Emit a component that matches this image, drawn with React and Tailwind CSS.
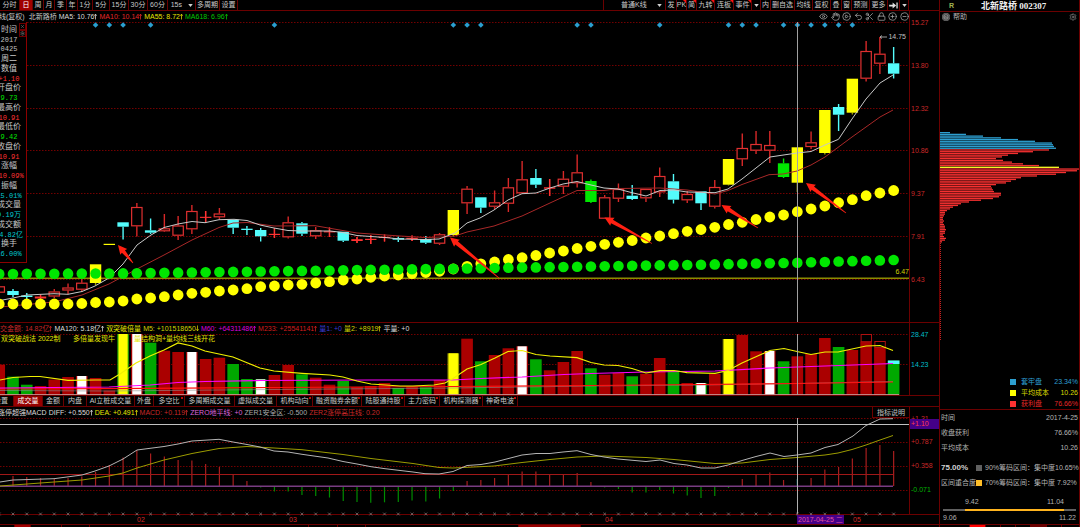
import React from "react";
import {
  Eye,
  Hand,
  CirclePlay,
  Undo2,
  Scissors,
  Lock,
  CirclePlus,
  CircleMinus,
  Settings,
  CircleHelp,
  X,
} from "lucide-react";

const STEP = 13.76;
const FIRST = 13;
const RED = "#ff3232";
const CYAN = "#54fcfc";
const GREEN = "#00e600";
const YELLOW = "#ffff00";
const xAt = (i) => FIRST + STEP * i;

// [kind, bodyTop, bodyBottom, high, low]; the first entry is session -1
const CANDLES = [
  ["r", 286.3, 292.7, 286, 293],
  ["c", 291, 295, 289, 297],
  ["c", 295.5, 297, 293, 301],
  ["x", 296.5, 298.5, 294.5, 299.5],
  ["r", 291.5, 296.5, 289, 298],
  ["r", 287.5, 290.5, 283.5, 294],
  ["r", 282.7, 289.7, 279, 292],
  ["y", 264.3, 283, 264.3, 285],
  ["y", 243.8, 245, 244, 245],
  ["c", 222.3, 226.7, 222.3, 239.5],
  ["r", 207, 226.3, 203, 236.5],
  ["c", 230.3, 232.7, 218.5, 234],
  ["r", 228.3, 231.3, 214, 232],
  ["r", 225.5, 235.7, 216, 240],
  ["r", 211, 229.3, 205, 234],
  ["x", 216.8, 217.9, 211, 222.5],
  ["r", 213.5, 217.3, 208, 219],
  ["c", 219.7, 227.7, 219.7, 234],
  ["c", 228.7, 230, 226, 235],
  ["c", 230, 236.3, 228, 241.5],
  ["x", 233.8, 235, 228, 238],
  ["r", 222.3, 237.3, 216.5, 238.5],
  ["c", 223.3, 233.7, 222, 236],
  ["r", 230.3, 236.3, 227, 239],
  ["x", 231.2, 232.4, 227.5, 237],
  ["c", 231.7, 240.7, 231.7, 242],
  ["x", 239.2, 241, 237, 243],
  ["x", 238.8, 240, 235, 244],
  ["x", 236.8, 238, 234.5, 241.5],
  ["c", 238, 239.7, 236.5, 242],
  ["x", 237.8, 239, 235.5, 241],
  ["c", 239, 242.7, 236, 244],
  ["r", 234.3, 243.7, 233, 245],
  ["y", 210, 235, 210, 236.5],
  ["r", 188.7, 203.3, 186, 214],
  ["c", 197.3, 207.7, 197.3, 213],
  ["r", 202.3, 206.7, 190.5, 209],
  ["r", 187.3, 203.7, 178, 212],
  ["r", 179.3, 193.3, 161, 193.3],
  ["c", 178, 184.7, 169, 188],
  ["x", 187.3, 188.7, 179, 196],
  ["r", 178.7, 186.7, 171, 194],
  ["r", 172.3, 183.3, 154.5, 187.5],
  ["g", 181, 202, 179.5, 203],
  ["r", 197.3, 218.7, 195, 218.7],
  ["r", 189, 198.7, 183.5, 202],
  ["c", 195.7, 199, 185, 200],
  ["r", 189, 198.3, 189, 202],
  ["r", 176, 192.3, 167.5, 197],
  ["c", 181.3, 199.7, 174, 203.5],
  ["r", 194, 200.3, 191, 203],
  ["c", 191.3, 203.3, 191.3, 210],
  ["r", 187, 206.7, 180, 208.5],
  ["y", 159, 184.7, 159, 185.5],
  ["r", 148, 159.3, 133.5, 166],
  ["r", 144, 150.7, 131, 154],
  ["r", 145, 150.7, 131, 163],
  ["g", 163.3, 177, 158.5, 178],
  ["y", 147.3, 182.7, 147.3, 192],
  ["r", 142.3, 147, 131.5, 149],
  ["y", 110, 153, 110, 154.5],
  ["c", 107, 114.7, 104, 131],
  ["y", 78.7, 112.7, 78.7, 114.5],
  ["r", 51, 78.7, 41, 81.5],
  ["r", 53.7, 63.7, 37, 74],
  ["c", 63.3, 73.7, 47, 78.5],
];

const MA5 =
  "0,300.5 13,298 27,295 54,293.7 68,294.3 82,291.5 95,286 109,278 123,264 137,245 151,235 164,227.5 178,224 192,221.5 205,222.7 219,219.7 234,219.3 247,220.5 260,225 274,228 288,230.5 302,231 330,231 343,232.5 357,235.5 385,237.5 400,239 425,239.5 439,239 447,236 455,233 467,223 480,218 494,210 508,200 522,193.7 536,193 550,188 563,184 577,181.5 591,185 604,188 618,189 632,192.7 646,196 660,190.5 674,190 687,192 715,192.7 728,189 742,179 770,157 797,153 811,151.5 825,145 838.5,139.3 852,119 866,99 880,83 893,75";
const MA10 =
  "0,307 27,304.5 54,302 82,295 109,284 137,269 164,255 192,240 219,227.5 233,223 247,222.5 274,226 315,225.7 357,233 400,236 425,237.5 441,237 455,236 467,232 494,226 522,216 550,203 577,190.5 604,190.5 618,188.5 660,188 687,190 715,194 728,190.5 742,184.5 769,174.7 783,174 797,171 811,165 825,157 852,137 880,117 893,110";

const YELLOW_DOTS = [
  304, 304, 304, 304, 304, 304, 303.5, 302.5, 302, 301, 299, 298, 296.7, 295, 293.3, 292.3, 291, 290, 288.7, 286.7,
  286, 285, 284.3, 283, 281.7, 280, 279, 277.3, 276, 275, 273.7, 272.5, 271.3, 269, 266.3, 263.8, 262, 259.5, 257.7,
  255.5, 253, 251, 248.5, 246.3, 244.3, 242.3, 240.5, 238, 236, 233.7, 231.3, 229.5, 227.3, 224.5, 222.3, 219.5, 217,
  215, 211.7, 209, 206, 202.7, 199.7, 195.7, 193, 190.5,
];
const GREEN_KEYS = [
  [-1, 274],
  [8, 273.4],
  [18, 271.5],
  [32, 268.7],
  [42, 266.5],
  [50, 264.7],
  [57, 262.7],
  [64, 260],
];
const greenDot = (i) => {
  const k = GREEN_KEYS.findIndex(([n]) => n >= i);
  if (k <= 0) return GREEN_KEYS[0][1];
  const [a, ya] = GREEN_KEYS[k - 1];
  const [b, yb] = GREEN_KEYS[k];
  return ya + ((yb - ya) * (i - a)) / (b - a);
};
const MARKS = [6, 7, 8, 10, 19, 32, 33, 34, 41, 42, 47, 52, 53, 54, 56, 57, 58, 59, 60, 61];
const ARROWS = [
  [118, 245, 133, 263],
  [450, 237.5, 499, 278],
  [604.5, 217.5, 652, 243.5],
  [721.5, 205, 758, 228],
  [806, 183, 846, 213],
];

const VOLUMES = [
  ["r", 364.7], ["g", 376.7], ["g", 384.7], ["r", 386], ["r", 379.5], ["r", 377], ["w", 376], ["r", 378], ["r", 390.5],
  ["yg", 334], ["w", 334], ["g", 342.7], ["r", 350.7], ["r", 352], ["w", 352], ["r", 359], ["r", 357.7], ["g", 364],
  ["g", 379], ["wg", 379.3], ["r", 375], ["r", 365], ["g", 374.3], ["r", 377.7], ["r", 384.7], ["g", 381], ["r", 387],
  ["r", 386], ["r", 383], ["g", 388], ["r", 386.7], ["g", 387.3], ["r", 380], ["y", 353.3], ["r", 338.7],
  ["g", 361.3], ["r", 355], ["r", 348.3], ["w", 346.3], ["g", 359.3], ["r", 370.3], ["r", 362], ["r", 351],
  ["g", 368.3], ["r", 374.7], ["r", 373], ["g", 376.3], ["r", 373.7], ["r", 358], ["g", 370.7], ["r", 383],
  ["wg", 383], ["r", 373.7], ["y", 339], ["r", 335], ["r", 351.3], ["w", 351], ["g", 361.3], ["r", 356.3],
  ["r", 354], ["r", 338], ["g", 347], ["r", 350], ["r", 341.7], ["r", 347.3], ["g", 360.7],
];
const VOL_M5 =
  "0,380 13,377.5 30,376.5 40,376.5 68,380.3 95,380 110,380 120,374 136,363 150,356 164,350 178,343 192,346 205,351 233,357 260,368 274,371 302,373.3 330,375 343,377 357,381 371,384 400,386 413,386 434,385 445,383 453,378.5 467,369 481,364.5 495,358 508,351.5 522,350.5 536,354.5 550,356 577,357.7 591,362.5 604,365 618,365.5 632,368.5 646,373 660,370.7 674,370.5 687,372.7 715,373.3 728,370.5 742,363 770,350.5 784,348.5 797,351.5 811,354.5 825,352 838,352 852,349 866,346 880,345.5 893,350.5";
const VOL_M60 =
  "0,388 109,387 150,385 178,382.5 205,381.5 260,380.5 371,380 453,380 481,378.5 522,377 564,374.5 591,373.5 646,372 715,371 770,368 811,366.5 853,365 893,363.5";
const VOL_M233 = "0,389 109,388.7 274,387.5 453,386.5 591,385.5 700,384.5 797,383.5 893,382";
const VOL_M120 = "0,390.5 109,391 274,389.5 453,388 591,386 700,385 797,383.5 893,381.5";

const DIFF =
  "0,482 13,480 54,478.7 82,475 95,471 109,466 123,459 137,450 164,446.5 178,444 192,441 219,439.3 233,442 247,444.5 260,447 274,451 288,452 302,454.3 328,458 343,461.5 357,464 371,466.7 385,468.7 413,472 425,473.7 439,474 453,471.5 467,465.5 481,464.5 495,462 522,455 536,453.5 550,453.5 563,452 577,450.7 591,454.5 604,457 618,459 646,461.5 660,460 674,463.5 687,465 701,468 715,468 728,465 742,460.5 756,456.5 770,453 784,456.5 797,455 811,453 825,447.5 838,444.5 853,436 866,425.5 880,419 893,418.7";
const DEA =
  "0,486 27,484 54,482 82,480 109,476 123,473 137,468 164,460 192,453.5 219,448.5 247,446.5 274,448 302,449.7 343,454.5 371,458.5 413,463.5 439,467.5 453,468 494,466 522,462.5 550,459.5 577,457 604,456 646,457.5 674,459.5 715,463.5 742,463 770,459.5 797,457.5 825,455 838,453 852,449.5 866,445 880,440 893,435.5";
const MACD_BARS = [
  476, 477, 478, 479, 478, 476.5, 472, 465, 457.5, 450, 453.5, 456.5, 460, 460.5, 464, 467, 474, 481, 487.5, 491.5,
  491.5, 495, 496, 497.5, 501, 502, 502.7, 502.3, 502, 500.5, 501.5, 498.5, 491, 481, 480, 478, 474, 471.5, 471.5, 474,
  474.5, 473, 482, 487.5, 489, 492.5, 492.5, 490, 493.5, 495.5, 498, 496, 488, 479, 474.5, 472.5, 480, 479, 478,
  469.5, 467, 458.5, 448, 445, 451,
];

const CHIPS = [
  10, 26, 43, 61, 78, 95, 112, 113, 114, 116, 109, 93, 78, 68, 62, 56, 63, 72, 83, 99, 119, 139, 137, 126, 116, 97, 81,
  76, 71, 66, 56, 51, 52, 53, 54, 61, 61, 59, 53, 41, 29, 21, 18, 13, 10, 7, 5, 5, 4, 3, 3, 4, 3, 4, 5, 5, 6, 5, 5, 3,
  4, 6, 5, 2,
];

const LEFT_TABS = [
  ["分时", "w-[20px]"], ["日", "w-[13px]"], ["周", "w-[11px]"], ["月", "w-[11px]"], ["季", "w-[12px]"],
  ["年", "w-[11px]"], ["1分", "w-[15px]"], ["5分", "w-[17px]"], ["15分", "w-[19px]"], ["30分", "w-[19px]"],
  ["60分", "w-[20px]"],
];
const TOOLS = [
  ["发", "w-[11px]"], ["PK", "w-[10px]", 1], ["简", "w-[10px]", 1], ["九转", "w-[18px]", 1], ["连板", "w-[19px]", 1],
  ["事件", "w-[18px]", 1], ["▾", "w-[9px]"], ["内", "w-[10px]"], ["删自选", "w-[24px]"], ["均线", "w-[18px]"],
  ["复权", "w-[18px]"], ["叠", "w-[11px]"], ["窗", "w-[10px]"], ["预测", "w-[18px]"], ["更多", "w-[18px]"],
  ["⇥", "w-[12px]"], ["▾", "w-[9px]"],
];
const INDICATOR_TABS = [
  ["设置", "w-[14px]"], ["成交量", "w-[29px]"], ["金额", "w-[21px]"], ["内盘", "w-[23px]"], ["AI立桩成交量", "w-[48px]"],
  ["外盘", "w-[19px]"], ["多空比", "w-[31px]", 1], ["多周期成交量", "w-[50px]"], ["虚拟成交量", "w-[42px]"],
  ["机构动向", "w-[36px]", 1], ["融资融券余额", "w-[49px]", 1], ["陆股通持股", "w-[43px]", 1], ["主力密码", "w-[35px]", 1],
  ["机构探测器", "w-[43px]", 1], ["神奇电波", "w-[35px]", 1],
];
const INFO = [
  ["时间"], ["2017", "text-[#c0c0c0]"], ["0425", "text-[#c0c0c0]"], ["周二"], ["数值"], ["+1.10", "text-[#ff3232]"],
  ["开盘价"], ["9.73", "text-[#00e600]"], ["最高价"], ["10.91", "text-[#ff3232]"], ["最低价"],
  ["9.42", "text-[#00e600]"], ["收盘价"], ["10.91", "text-[#ff3232]"], ["涨幅"], ["+10.09%", "text-[#ff3232]"],
  ["振幅"], ["15.01%", "text-[#00c8d2]"], ["成交量"], ["9.19万", "text-[#00c8d2]"], ["成交额"],
  ["14.82亿", "text-[#00c8d2]"], ["换手"], ["16.00%", "text-[#00c8d2]"],
];

function Caret() {
  return (
    <svg viewBox="0 0 6 4" className="h-[3px] w-[5px] shrink-0" aria-hidden="true">
      <path d="M0 0h6L3 4z" fill="#d0d0d0" />
    </svg>
  );
}

function Trend({ down }) {
  return (
    <svg viewBox="0 0 4 8" className="h-[7px] w-[3px] shrink-0" aria-hidden="true">
      <path d={down ? "M2 0V7M.5 5L2 7.2L3.5 5" : "M2 8V1M.5 3L2 .8L3.5 3"} fill="none" stroke="currentColor" strokeWidth="1" />
    </svg>
  );
}

function Reading({ tone, children, up, down }) {
  return (
    <span className={"flex items-center " + tone}>
      {children}
      {up && <Trend />}
      {down && <Trend down />}
    </span>
  );
}

function NewMark() {
  return <span className="absolute right-px top-px size-[2px] rounded-full bg-[#ff1010]" />;
}

function TopBar() {
  return (
    <nav className="flex h-[11px] items-stretch justify-between border-b border-[#6b0000] text-[7px] leading-[10px] text-[#c8c8c8]">
      <div className="flex">
        {LEFT_TABS.map(([label, width]) => (
          <button
            key={label}
            type="button"
            className={
              width +
              " whitespace-nowrap border-r border-[#6b0000] text-center " +
              (label === "日" ? "bg-[#a00000] text-white" : "")
            }
          >
            {label}
          </button>
        ))}
        <button type="button" className="flex w-[28px] items-center justify-end gap-[6px] border-r border-[#6b0000] pr-[2px]">
          15s <Caret />
        </button>
        <button type="button" className="w-[24px] whitespace-nowrap border-r border-[#6b0000]">多周期</button>
        <button type="button" className="w-[18px] whitespace-nowrap border-r border-[#6b0000]">设置</button>
      </div>
      <div className="mr-[30px] flex border-l border-[#6b0000]">
        <label className="flex w-[62px] items-center border-r border-[#6b0000] pl-[17px] pr-[3px]">
          <span className="sr-only">K线类型</span>
          <select className="h-[10px] w-full appearance-none bg-transparent text-[7px] leading-[10px] outline-none">
            <option>普通K线</option>
          </select>
          <Caret />
        </label>
        {TOOLS.map(([label, width, isNew], i) => (
          <button
            key={i}
            type="button"
            aria-label={label === "▾" ? "展开" : label === "⇥" ? "右移" : label}
            className={width + " relative flex items-center justify-center whitespace-nowrap border-r border-[#6b0000]"}
          >
            {label === "▾" ? (
              <Caret />
            ) : label === "⇥" ? (
              <svg viewBox="0 0 10 8" className="h-[7px] w-[9px]" aria-hidden="true">
                <path d="M0 3h4V.5L8 4L4 7.5V5H0zM8.3 .5h1.5v7H8.3z" fill="#e0e0e0" />
              </svg>
            ) : (
              label
            )}
            {isNew && (
              <svg viewBox="0 0 3 3" className="absolute right-0 top-0 size-[3px]" aria-hidden="true">
                <path d="M0 0h3v3z" fill="#ff1010" />
              </svg>
            )}
          </button>
        ))}
      </div>
    </nav>
  );
}

function ChartTools() {
  const items = [
    ["显示", Eye], ["拖动", Hand], ["播放", CirclePlay], ["撤销", Undo2],
    ["裁剪", Scissors], ["锁定", Lock], ["放大", CirclePlus], ["缩小", CircleMinus],
  ];
  return (
    <div className="flex w-[90px] items-center justify-between">
      {items.map(([label, Icon]) => (
        <button key={label} type="button" aria-label={label}>
          <Icon className="text-[#a8a8a8]" size={9} strokeWidth={2} />
        </button>
      ))}
    </div>
  );
}

function Grid({ rows }) {
  return rows.map((y) => (
    <line key={y} x1="0" x2="909" y1={y} y2={y} stroke="#720000" strokeWidth="1" strokeDasharray="1.5 1.5" />
  ));
}

function Candle({ i, data }) {
  const [kind, top, bottom, high, low] = data;
  const x = xAt(i);
  const color = kind === "c" ? CYAN : kind === "g" ? GREEN : kind === "y" ? YELLOW : RED;
  const wick = kind === "y" ? "#a0a000" : kind === "r" ? "#d82828" : color;
  return (
    <g>
      {high < top && <line x1={x} x2={x} y1={high} y2={top} stroke={wick} strokeWidth="1.4" />}
      {low > bottom && <line x1={x} x2={x} y1={bottom} y2={low} stroke={wick} strokeWidth="1.4" />}
      {kind === "r" ? (
        <rect x={x - 5.2} y={top + 0.5} width="10.4" height={Math.max(bottom - top - 1, 1)} fill="#000" stroke="#e03030" strokeWidth="1.2" />
      ) : (
        <rect x={x - 5.7} y={top} width="11.4" height={bottom - top} fill={color} />
      )}
      {kind === "x" && <line x1={x} x2={x} y1={high} y2={low} stroke={RED} strokeWidth="1.2" />}
    </g>
  );
}

function Pointer({ points: [x1, y1, x2, y2] }) {
  const len = Math.hypot(x2 - x1, y2 - y1);
  const ux = (x2 - x1) / len;
  const uy = (y2 - y1) / len;
  const at = (along, side) => `${x1 + ux * along - uy * side},${y1 + uy * along + ux * side}`;
  const shape = [at(0, 0), at(9, -4.5), at(8.5, -2), at(len, -0.4), at(len, 0.4), at(8.5, 2), at(9, 4.5)];
  return <polygon points={shape.join(" ")} fill="#ff2012" />;
}

function PriceChart() {
  return (
    <svg viewBox="0 22 909 300" preserveAspectRatio="none" className="block h-[300px] w-full" role="img" aria-label="日K线">
      <Grid rows={[22.5, 65.5, 108.5, 150.5, 193.5, 236.5, 279.5]} />
      <line x1="0" x2="909" y1="278.3" y2="278.3" stroke="#8c8c00" strokeWidth="1.4" />
      {MARKS.map((i) => {
        const x = xAt(i);
        return <path key={i} d={`M${x} 22.2L${x + 2.8} 25L${x} 27.8L${x - 2.8} 25Z`} fill="#2a9fd0" />;
      })}
      {CANDLES.map((c, n) => (
        <Candle key={n} i={n - 1} data={c} />
      ))}
      <polyline points={MA10} fill="none" stroke="#a82828" strokeWidth="1" />
      <polyline points={MA5} fill="none" stroke="#c8c8c8" strokeWidth="1" />
      {YELLOW_DOTS.map((y, n) => (
        <circle key={n} cx={xAt(n - 1)} cy={y} r="5.4" fill={YELLOW} />
      ))}
      {YELLOW_DOTS.map((_, n) => (
        <circle key={n} cx={xAt(n - 1)} cy={greenDot(n - 1)} r="5.3" fill={GREEN} />
      ))}
      <line x1="797.5" x2="797.5" y1="22" y2="322" stroke="#a0a0a0" strokeWidth="1" />
      {ARROWS.map((p, n) => (
        <Pointer key={n} points={p} />
      ))}
      <path d="M887 37h-7m2-1.5l-2 1.5l2 1.5" fill="none" stroke="#c0c0c0" strokeWidth=".8" />
    </svg>
  );
}

const VOL_FILL = { r: "#aa0000", g: "#00a800", w: "#ffffff", wg: "#ffffff", y: "#ffff00", yg: "#ffff00" };
const VOL_EDGE = { w: "#a80000", wg: "#00a000", y: "#a0a000", yg: "#20a000" };

function VolumeChart() {
  return (
    <svg viewBox="0 334 909 61" preserveAspectRatio="none" className="block h-[61px] w-full" role="img" aria-label="成交量">
      <Grid rows={[334.5, 364.5]} />
      {VOLUMES.map(([kind, top], n) => {
        const x = xAt(n - 1);
        const edge = VOL_EDGE[kind];
        return edge ? (
          <g key={n}>
            <rect x={x - 5.8} y={top} width="11.6" height={395 - top} fill={edge} />
            <rect x={x - 4.6} y={top} width="9.2" height={395 - top} fill={VOL_FILL[kind]} />
          </g>
        ) : (
          <rect key={n} x={x - 5.8} y={top} width="11.6" height={395 - top} fill={VOL_FILL[kind]} />
        );
      })}
      <rect x={xAt(62) - 5} y="334.5" width="10.4" height="7.2" fill="none" stroke="#b01010" />
      <rect x={xAt(63) - 5} y="341.5" width="10.4" height="6" fill="none" stroke="#b01010" />
      <rect x={xAt(64) - 5.8} y="360.5" width="11.6" height="3.5" fill={CYAN} />
      <line x1="0" x2="899" y1="394.6" y2="394.6" stroke="#c89090" strokeWidth="1" />
      <polyline points={VOL_M120} fill="none" stroke="#909090" strokeWidth=".6" />
      <polyline points={VOL_M233} fill="none" stroke="#ff1010" strokeWidth="1.2" />
      <polyline points={VOL_M60} fill="none" stroke="#ff00ff" strokeWidth="1.2" />
      <polyline points={VOL_M5} fill="none" stroke="#f0f000" strokeWidth="1.2" />
      <line x1="797.5" x2="797.5" y1="334" y2="395" stroke="#a0a0a0" strokeWidth="1" />
    </svg>
  );
}

function MacdChart() {
  return (
    <svg viewBox="0 418 909 100" preserveAspectRatio="none" className="block h-[100px] w-full" role="img" aria-label="MACD">
      <Grid rows={[418.5, 442.5, 466.5, 490.5]} />
      {MACD_BARS.map((y, i) => (
        <line
          key={i}
          x1={xAt(i)}
          x2={xAt(i)}
          y1="486"
          y2={y}
          stroke={i === 57 ? "#008080" : y > 486 ? "#008c00" : "#a81e1e"}
          strokeWidth="1.2"
        />
      ))}
      <line x1="0" x2="893" y1="474.5" y2="474.5" stroke="#a01818" />
      <line x1="0" x2="893" y1="486.2" y2="486.2" stroke="#783c82" strokeWidth="1.6" />
      <polyline points={DEA} fill="none" stroke="#9c9c00" strokeWidth="1" />
      <polyline points={DIFF} fill="none" stroke="#b4b4b4" strokeWidth="1" />
      <line x1="0" x2="909" y1="424.5" y2="424.5" stroke="#c0c0c0" />
      <line x1="797.5" x2="797.5" y1="418" y2="514" stroke="#b0b0b0" />
      <line x1="0" x2="909" y1="514.5" y2="514.5" stroke="#6b0000" />
      {Array.from({ length: 66 }, (_, n) => {
        const x = xAt(n - 1);
        return <path key={n} d={`M${x - 1.4} 512.6l2.8 2.8m0-2.8l-2.8 2.8`} stroke="#8c8080" strokeWidth=".7" />;
      })}
    </svg>
  );
}

function InfoPanel() {
  return (
    <aside className="absolute left-0 top-0 w-[27px] overflow-hidden border-b border-r border-[#8c0000] bg-black pb-[3px] pt-[3px]">
      <div className="-ml-[9px] flex h-[234px] w-[36px] flex-col text-center text-[8px] text-[#c8c8c8]">
        {INFO.map(([text, tone], n) => (
          <span
            key={n}
            className={
              "flex flex-1 items-center justify-center whitespace-nowrap " +
              (tone ? "font-['Liberation_Mono','Noto_Sans_CJK_SC',monospace] text-[7px] leading-[8px] " + tone : "leading-[8px]")
            }
          >
            {text}
          </span>
        ))}
      </div>
      <div className="absolute right-0 top-px flex flex-col">
        <button type="button" aria-label="关闭" className="border border-[#6b0000]">
          <X size={5} className="text-[#909090]" />
        </button>
        <button type="button" aria-label="设置" className="border border-[#6b0000]">
          <Settings size={5} className="text-[#909090]" />
        </button>
      </div>
    </aside>
  );
}

function Axis({ labels, className }) {
  return (
    <div className={"flex flex-col justify-between pl-px text-[7px] leading-[8px] " + className}>
      {labels.map((t, n) => (
        <span key={n}>{t}</span>
      ))}
    </div>
  );
}

function Charts() {
  return (
    <main className="min-w-0 flex-1 overflow-hidden">
      <section className="grid grid-cols-[minmax(0,1fr)_30px] border-b border-[#6b0000]">
        <div className="min-w-0">
          <div className="flex h-[11px] items-center justify-between whitespace-nowrap text-[7px] leading-[11px]">
            <div className="-ml-px flex gap-[2px] text-[#c8c8c8]">
              <span>线(复权)</span>
              <span className="ml-[2px]">北新路桥</span>
              <Reading tone="text-[#dcdcdc]" up>MA5: 10.76</Reading>
              <Reading tone="text-[#e62828]" up>MA10: 10.14</Reading>
              <Reading tone="text-[#e6e600]" up>MA55: 8.72</Reading>
              <Reading tone="text-[#00c800]" up>MA618: 6.96</Reading>
            </div>
            <ChartTools />
          </div>
          <div className="relative">
            <PriceChart />
            <InfoPanel />
            <span className="absolute right-[3px] top-[11px] text-[7px] leading-[8px] text-[#c0c0c0]">14.75</span>
            <span className="absolute right-0 top-[246px] text-[7px] leading-[8px] text-[#d2d200]">6.47</span>
          </div>
        </div>
        <div className="border-l border-[#6b0000] pt-[8px]">
          <Axis
            className="h-[265px] text-[#c82828]"
            labels={["15.27", "13.80", "12.32", "10.86", "9.37", "7.91", "6.43"]}
          />
        </div>
      </section>

      <section className="grid grid-cols-[minmax(0,1fr)_30px]">
        <div className="min-w-0">
          <div className="flex h-[11px] items-center gap-[2px] whitespace-nowrap text-[7px] leading-[11px]">
            <Reading tone="-ml-[7px] text-[#c82828]" up>成交金额: 14.82亿</Reading>
            <Reading tone="text-[#dcdcdc]" up>MA120: 5.18亿</Reading>
            <Reading tone="text-[#e6e600]">双突破倍量</Reading>
            <Reading tone="text-[#d2d200]" down>M5: +101518650</Reading>
            <Reading tone="text-[#dc00dc]" up>M60: +64311486</Reading>
            <Reading tone="text-[#d21e1e]" up>M233: +25541141</Reading>
            <Reading tone="text-[#3c3cd2]">量1: +0</Reading>
            <Reading tone="text-[#d2d200]" up>量2: +8919</Reading>
            <Reading tone="text-[#dcdcdc]">平量: +0</Reading>
          </div>
          <div className="relative">
            <VolumeChart />
            <div className="absolute left-px top-0 flex whitespace-nowrap text-[7px] leading-[9px] text-[#e6e600]">
              <span className="w-[72px]">双突破战法 2022制</span>
              <span className="w-[61px]">多倍量发现牛</span>
              <span>量结构洞+量均线三线开花</span>
            </div>
          </div>
        </div>
        <div className="border-l border-[#6b0000] pt-[8px]">
          <Axis className="h-[38px] text-[#00bec8]" labels={["28.47", "14.23"]} />
        </div>
      </section>

      <nav className="flex h-[12px] items-stretch overflow-hidden border-y border-[#6b0000] text-[7px] leading-[10px] text-[#c8c8c8]">
        {INDICATOR_TABS.map(([label, width, isNew]) => (
          <button
            key={label}
            type="button"
            className={
              width +
              " relative flex shrink-0 items-center whitespace-nowrap border-r border-[#6b0000] " +
              (label === "设置" ? "justify-end pr-[5px] " : "justify-center ") +
              (label === "成交量" ? "bg-[#960000] text-white" : "")
            }
          >
            {label}
            {isNew && <NewMark />}
          </button>
        ))}
      </nav>

      <section className="grid grid-cols-[minmax(0,1fr)_30px]">
        <div className="min-w-0">
          <div className="flex h-[11px] items-center justify-between whitespace-nowrap text-[7px] leading-[11px]">
            <div className="flex gap-[2px]">
              <Reading tone="-ml-[2px] text-[#dcdcdc]">涨停超强MACD</Reading>
              <Reading tone="text-[#dcdcdc]" up>DIFF: +0.550</Reading>
              <Reading tone="text-[#e6e600]" up>DEA: +0.491</Reading>
              <Reading tone="text-[#c82828]" up>MACD: +0.119</Reading>
              <Reading tone="text-[#dc64dc]">ZERO地平线: +0</Reading>
              <Reading tone="text-[#aaaaaa]">ZER1安全区: -0.500</Reading>
              <Reading tone="text-[#c82828]">ZER2涨停高压线: 0.20</Reading>
            </div>
            <button type="button" className="h-[11px] w-[37px] border-b border-l border-[#6b0000] text-[#c0c0c0]">
              指标说明
            </button>
          </div>
          <MacdChart />
        </div>
        <div className="mb-[3px] border-b border-l border-[#6b0000] text-[7px] leading-[8px] text-[#c82828]">
          <div className="mt-[8px] h-[4px] overflow-hidden pl-px">+1.31</div>
          <div className="h-[10px] bg-[#440088] pl-px leading-[10px] text-[#ff3c50]">+1.10</div>
          <Axis className="mt-[9px] h-[56px]" labels={["+0.787", "+0.358", <span key="n" className="text-[#00b400]">-0.071</span>]} />
        </div>
      </section>

      <div className="-mt-[3px] grid h-[9px] grid-cols-[137fr_152fr_316fr_192fr_56fr_56fr_30px] whitespace-nowrap text-[7px] leading-[9px] text-[#d22828]">
        <span className="col-start-2">02</span>
        <span>03</span>
        <span>04</span>
        <span className="justify-self-start bg-[#440088] px-px text-[#e650a0]">2017-04-25 二</span>
        <span>05</span>
      </div>
      <div className="grid h-[3px] grid-cols-[15fr_16fr_31fr_28fr_219fr_29fr_28fr_153fr_62fr_358fr] divide-x divide-[#6b0000] border-t border-[#6b0000]">
        <i />
        <i className="bg-[#a00000]" />
        <i />
        <i />
        <i />
        <i />
        <i />
        <i />
        <i className="bg-[#960000]" />
        <i />
      </div>
    </main>
  );
}

function StatRow({ label, value }) {
  return (
    <div className="flex h-[15px] items-center justify-between">
      <dt>{label}</dt>
      <dd>{value}</dd>
    </div>
  );
}

function Sidebar() {
  return (
    <aside className="flex w-[141px] shrink-0 flex-col border-x border-[#6b0000] text-[7px] leading-[8px] text-[#b4b4b4]">
      <header className="flex h-[12px] items-center border-b border-[#6b0000]">
        <span className="w-[41px] pl-[9px] font-bold text-[#a0b450]">R</span>
        <h1 className="whitespace-nowrap font-['Liberation_Serif','Noto_Sans_CJK_SC',serif] text-[9px] font-bold leading-[10px] text-[#f0f0f0]">
          北新路桥 002307
        </h1>
      </header>
      <div className="flex h-[10px] items-center justify-between px-[2px]">
        <button type="button" className="flex items-center gap-[3px]">
          <CircleHelp size={8} className="rounded-full bg-[#808080] text-[#303030]" />
          帮助
        </button>
        <button type="button" aria-label="设置">
          <Settings size={8} className="text-[#909090]" />
        </button>
      </div>
      <svg viewBox="0 22 139 354" preserveAspectRatio="none" className="block h-[354px] w-full" role="img" aria-label="筹码分布">
        {CHIPS.map((w, n) => (
          <rect
            key={n}
            x="0"
            y={132 + n * 1.733}
            width={w}
            height="1.3"
            fill={n < 10 ? "#2d9fd0" : n === 20 ? "#ffff28" : "#f53030"}
          />
        ))}
        <line x1=".5" x2=".5" y1="243" y2="341" stroke="#c82020" strokeDasharray="1 1" />
      </svg>
      <ul className="flex flex-col pr-px">
        {[
          ["套牢盘", "23.34%", "bg-[#2d9fd0]", "text-[#2d9fd0]"],
          ["平均成本", "10.26", "bg-[#ffff00]", "text-[#dcdc00]"],
          ["获利盘", "76.66%", "bg-[#ff3232]", "text-[#e62828]"],
        ].map(([name, value, swatch, tone]) => (
          <li key={name} className={"flex h-[11px] items-center " + tone}>
            <span className={"ml-[70px] mr-[5px] size-[6px] " + swatch} />
            <span>{name}</span>
            <span className="ml-auto">{value}</span>
          </li>
        ))}
      </ul>
      <dl className="border-t border-[#6b0000] pl-px pr-px">
        <StatRow label="时间" value="2017-4-25" />
        <StatRow label="收盘获利" value="76.66%" />
        <StatRow label="平均成本" value="10.26" />
      </dl>
      <div className="mt-[5px] flex flex-col whitespace-nowrap pl-px">
        {[
          ["75.00%", "90%筹码区间：集中度10.65%", "bg-[#606060]", "font-bold text-[#d0d0d0] text-[8px]"],
          ["区间重合度", "70%筹码区间：集中度 7.92%", "bg-[#ffbe28]", ""],
        ].map(([label, text, swatch, tone]) => (
          <div key={label} className="flex h-[15px] items-center">
            <span className={"w-[35px] " + tone}>{label}</span>
            <span className={"mr-[3px] size-[6px] shrink-0 " + swatch} />
            <span>{text}</span>
          </div>
        ))}
      </div>
      <div className="mt-[8px] px-[3px]">
        <div className="flex justify-between pl-[22px] pr-[12px]">
          <span>9.42</span>
          <span>11.04</span>
        </div>
        <div className="my-[3px] grid h-[2px] grid-cols-[22fr_98fr_12fr]">
          <i className="bg-[#606060]" />
          <i className="bg-[#ffb41e]" />
          <i className="bg-[#606060]" />
        </div>
        <div className="flex justify-between">
          <span>9.06</span>
          <span>11.22</span>
        </div>
      </div>
      <div className="mt-auto grid h-[3px] grid-cols-[30fr_16fr_15fr_15fr_15fr_16fr_15fr_17fr] divide-x divide-[#6b0000] border-t border-[#6b0000]">
        <i />
        <i className="bg-[#ff0000]" />
        <i />
        <i />
        <i />
        <i className="bg-[#6b0000]" />
        <i />
        <i />
      </div>
    </aside>
  );
}

export default function App() {
  return (
    <div className="flex bg-black font-['Liberation_Sans','Noto_Sans_CJK_SC',sans-serif]">
      <div className="flex min-w-0 flex-1 flex-col">
        <TopBar />
        <Charts />
      </div>
      <Sidebar />
    </div>
  );
}
